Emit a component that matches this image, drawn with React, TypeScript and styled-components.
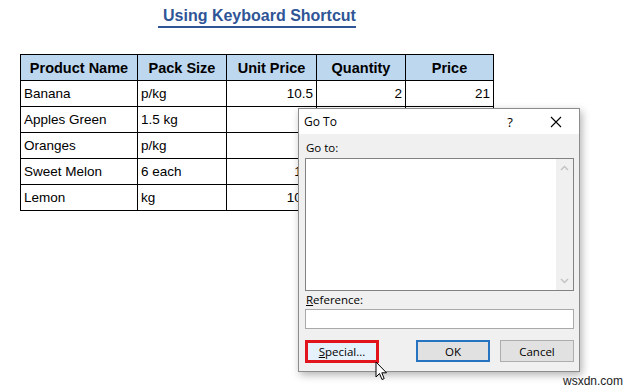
import styled, { createGlobalStyle } from 'styled-components'

const GlobalStyle = createGlobalStyle`
  html, body {
    margin: 0;
    padding: 0;
    background: #ffffff;
  }
`

const Page = styled.div`
  position: relative;
  width: 636px;
  height: 392px;
  overflow: hidden;
  background: #ffffff;
  font-family: "Liberation Sans", Arial, sans-serif;
`

const TitleRow = styled.div`
  display: flex;
  padding: 6px 0 0 158px;
  height: 54px;
  box-sizing: border-box;
`

const Title = styled.h1`
  margin: 0;
  height: 20px;
  padding-left: 5px;
  font-size: 16px;
  font-weight: bold;
  line-height: 20px;
  color: #2f5597;
  border-bottom: 2px solid #2f5597;
`

const Sheet = styled.table`
  margin-left: 20px;
  border-collapse: collapse;
  font-size: 13.5px;
  color: #000;
`

const HeadCell = styled.th<{ $w: number }>`
  width: ${({ $w }) => $w}px;
  height: 26px;
  padding: 0;
  border: 1px solid #000;
  background: #bdd7ee;
  font-size: 14.5px;
  font-weight: bold;
  text-align: center;
  box-sizing: border-box;
`

const Cell = styled.td<{ $num?: boolean }>`
  height: 26px;
  padding: 0 3px;
  border: 1px solid #000;
  text-align: ${({ $num }) => ($num ? 'right' : 'left')};
  box-sizing: border-box;
`

const Dialog = styled.div`
  position: absolute;
  left: 298px;
  top: 108px;
  width: 282px;
  height: 264px;
  box-sizing: border-box;
  border: 1px solid #8c8c8c;
  background: #f0f0f0;
  box-shadow: 2px 3px 8px rgba(0, 0, 0, 0.3);
  font-family: "Open Sans", "Noto Sans", sans-serif;
  font-size: 11.5px;
  color: #000;
  display: flex;
  flex-direction: column;
`

const TitleBar = styled.div`
  height: 25px;
  background: #ffffff;
  display: flex;
  align-items: center;
  padding-left: 5px;
  font-size: 12px;
`

const TitleText = styled.span`
  flex: 1;
`

const TitleButton = styled.span<{ $w: number }>`
  width: ${({ $w }) => $w}px;
  display: flex;
  justify-content: center;
  align-items: center;
  font-size: 13px;
`

const Body = styled.div`
  flex: 1;
  display: flex;
  flex-direction: column;
  padding: 5px 5px 0 6px;
`

const Label = styled.div`
  height: 17px;
  line-height: 17px;
  padding-left: 1px;
`

const ListBox = styled.div`
  height: 133px;
  margin-top: 2px;
  border: 1px solid #828282;
  background: #ffffff;
  box-sizing: border-box;
  display: flex;
  justify-content: flex-end;
`

const ScrollTrack = styled.div`
  width: 17px;
  background: #f0f0f0;
  display: flex;
  flex-direction: column;
  justify-content: space-between;
  align-items: center;
  padding: 6px 0;
`

const RefInput = styled.div`
  height: 20px;
  margin-top: 1px;
  border: 1px solid #a9a9a9;
  background: #ffffff;
  box-sizing: border-box;
`

const ButtonRow = styled.div`
  display: flex;
  margin-top: 11px;
`

const Button = styled.div<{ $variant?: 'special' | 'default' }>`
  width: 74px;
  height: ${({ $variant }) => ($variant === 'special' ? 23 : 22)}px;
  box-sizing: border-box;
  display: flex;
  justify-content: center;
  align-items: center;
  background: ${({ $variant }) => ($variant === 'special' ? '#e5f1fb' : '#e1e1e1')};
  border: ${({ $variant }) =>
    $variant === 'special'
      ? '3px solid #e2141b'
      : $variant === 'default'
        ? '2px solid #2573c1'
        : '1px solid #adadad'};
  margin-left: ${({ $variant }) => ($variant === 'default' ? 37 : 10)}px;
  &:first-child {
    margin-left: 0;
  }
`

const Cursor = styled.svg`
  position: absolute;
  left: 375px;
  top: 361px;
`

const Watermark = styled.div`
  position: absolute;
  left: 563px;
  top: 374px;
  font-family: "Liberation Sans", Arial, sans-serif;
  font-size: 12px;
  color: #222;
`

const columns = [
  { label: 'Product Name', w: 117 },
  { label: 'Pack Size', w: 89 },
  { label: 'Unit Price', w: 90 },
  { label: 'Quantity', w: 89 },
  { label: 'Price', w: 88 },
]

// cells that sit under the Go To dialog are left blank
const rows = [
  ['Banana', 'p/kg', '10.5', '2', '21'],
  ['Apples Green', '1.5 kg', '', '', ''],
  ['Oranges', 'p/kg', '', '', ''],
  ['Sweet Melon', '6 each', '1.2', '', ''],
  ['Lemon', 'kg', '10.5', '', ''],
]

const Chevron = ({ up }: { up?: boolean }) => (
  <svg width="9" height="6" viewBox="0 0 9 6">
    <path
      d={up ? 'M1 5 L4.5 1.5 L8 5' : 'M1 1 L4.5 4.5 L8 1'}
      fill="none"
      stroke="#c2c2c2"
      strokeWidth="1.4"
    />
  </svg>
)

export default function App() {
  return (
    <Page>
      <GlobalStyle />
      <TitleRow>
        <Title>Using Keyboard Shortcut</Title>
      </TitleRow>
      <Sheet>
        <thead>
          <tr>
            {columns.map((c) => (
              <HeadCell key={c.label} $w={c.w}>{c.label}</HeadCell>
            ))}
          </tr>
        </thead>
        <tbody>
          {rows.map((r) => (
            <tr key={r[0]}>
              <Cell>{r[0]}</Cell>
              <Cell>{r[1]}</Cell>
              <Cell $num>{r[2]}</Cell>
              <Cell $num>{r[3]}</Cell>
              <Cell $num>{r[4]}</Cell>
            </tr>
          ))}
        </tbody>
      </Sheet>

      <Dialog>
        <TitleBar>
          <TitleText>Go To</TitleText>
          <TitleButton $w={46}>?</TitleButton>
          <TitleButton $w={46}>
            <svg width="12" height="12" viewBox="0 0 12 12">
              <path d="M1 1 L11 11 M11 1 L1 11" stroke="#000" strokeWidth="1.1" />
            </svg>
          </TitleButton>
        </TitleBar>
        <Body>
          <Label>Go to:</Label>
          <ListBox>
            <ScrollTrack>
              <Chevron up />
              <Chevron />
            </ScrollTrack>
          </ListBox>
          <Label>
            <u>R</u>eference:
          </Label>
          <RefInput />
          <ButtonRow>
            <Button $variant="special">
              <span><u>S</u>pecial...</span>
            </Button>
            <Button $variant="default">OK</Button>
            <Button>Cancel</Button>
          </ButtonRow>
        </Body>
      </Dialog>

      <Cursor width="14" height="22" viewBox="0 0 14 22">
        <path
          d="M1 1 L1 16 L4.5 12.5 L7 18.5 L9.2 17.6 L6.8 11.8 L11.5 11.8 Z"
          fill="#fff"
          stroke="#000"
          strokeWidth="1"
          strokeLinejoin="round"
        />
      </Cursor>
      <Watermark>wsxdn.com</Watermark>
    </Page>
  )
}
